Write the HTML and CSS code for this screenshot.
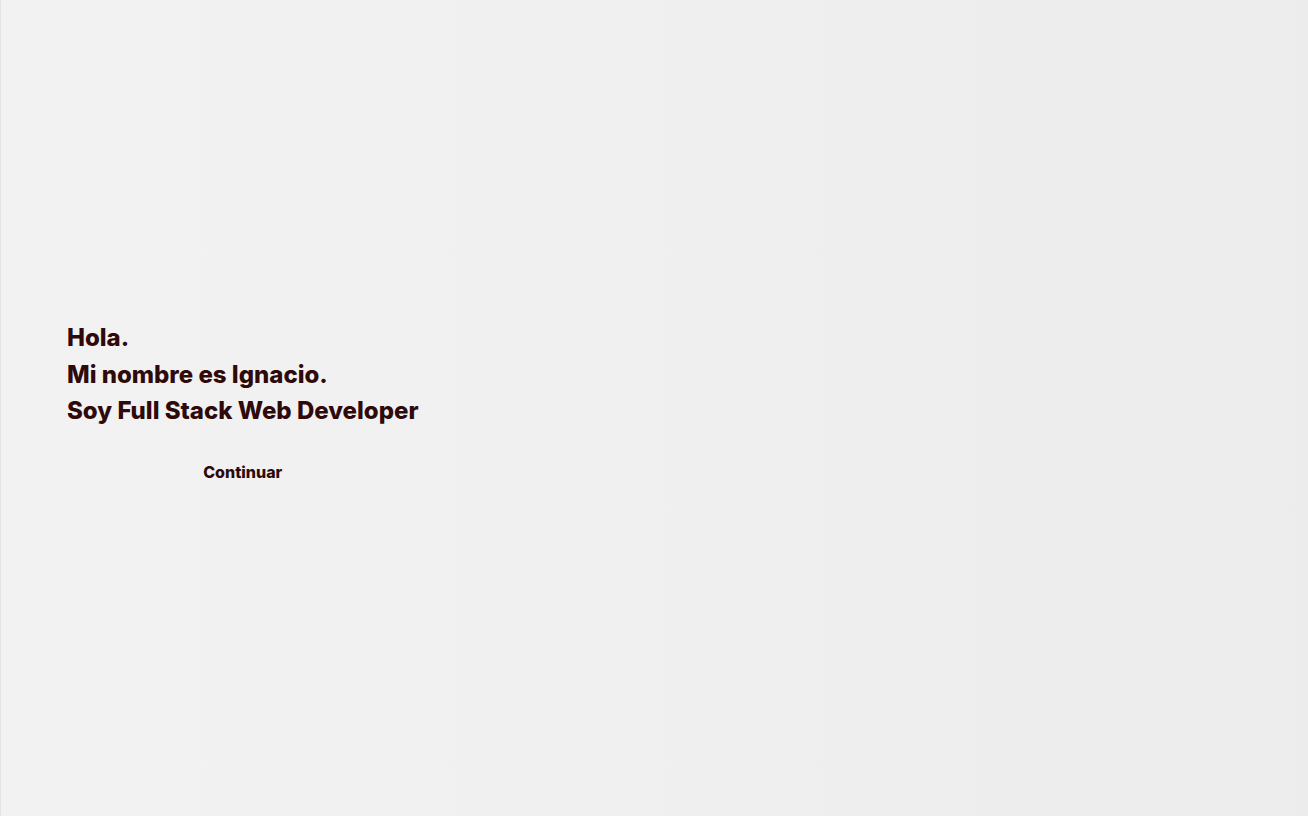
FILE: index.html
```html
<!DOCTYPE html>
<html lang="es">
<head>
<meta charset="utf-8">
<title>Ignacio</title>
<link rel="stylesheet" href="styles.css">
</head>
<body>
<main class="hero">
  <section class="intro">
    <h1 class="title">
      <span class="line">Hola.</span>
      <span class="line">Mi nombre es Ignacio.</span>
      <span class="line">Soy Full Stack Web Developer</span>
    </h1>
    <button class="cta" type="button">Continuar</button>
  </section>
</main>
</body>
</html>
```
FILE: styles.css
```css
html, body {
  margin: 0;
  padding: 0;
  height: 100%;
}
body {
  font-family: Inter, "Liberation Sans", Arial, sans-serif;
  color: #2e0a0a;
  background: linear-gradient(90deg, #f2f2f2 0%, #f0f0f0 45%, #ececec 100%);
}
.hero {
  min-height: 100vh;
  box-sizing: border-box;
  display: flex;
  align-items: center;
  padding: 0 0 14px 66px;
  border-left: 1px solid #e4e4e4;
}
.intro {
  display: flex;
  flex-direction: column;
  align-items: center;
}
.title {
  margin: 0;
  font-size: 24px;
  font-weight: 800;
  line-height: 36.5px;
  letter-spacing: 0;
  display: flex;
  flex-direction: column;
  align-self: flex-start;
}
.cta {
  margin-top: 32px;
  background: none;
  border: 0;
  padding: 0;
  font-family: inherit;
  font-size: 16px;
  font-weight: 800;
  color: #2e0a0a;
  cursor: pointer;
}
```
